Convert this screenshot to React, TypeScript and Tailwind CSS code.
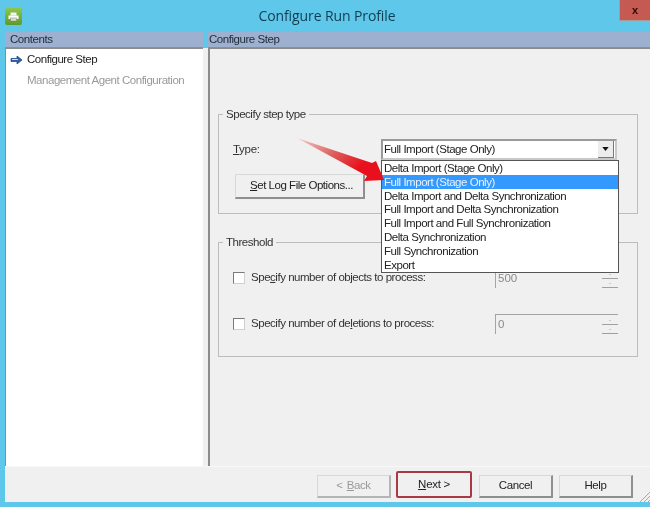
import React from 'react';

const font = "font-['Liberation_Sans',Arial,sans-serif]";

const dropdownItems = [
  'Delta Import (Stage Only)',
  'Full Import (Stage Only)',
  'Delta Import and Delta Synchronization',
  'Full Import and Delta Synchronization',
  'Full Import and Full Synchronization',
  'Delta Synchronization',
  'Full Synchronization',
  'Export',
];

function WizardButton({ children, disabled }: { children: React.ReactNode; disabled?: boolean }) {
  return (
    <button
      className={`w-[74px] h-[23px] flex items-center justify-center bg-[#f0f0f0] border border-[#d8d8d8] border-r-2 border-b-2 border-r-[#8f8f8f] border-b-[#8f8f8f] text-[11.5px] tracking-[-0.4px] ${disabled ? 'text-[#9a9a9a] border-r-[#b5b5b5] border-b-[#b5b5b5]' : 'text-[#222]'}`}
    >
      {children}
    </button>
  );
}

function Spinner({ value }: { value: string }) {
  return (
    <div className="w-[123px] h-[20px] flex items-center justify-between border-l border-t border-[#a4a4a4] bg-[#f0f0f0] pl-[2px] text-[11.5px] text-[#8a8a8a]">
      <span>{value}</span>
      <div className="w-[16px] h-full flex flex-col border-b border-[#a0a0a0]">
        <div className="flex-1 flex items-center justify-center text-[7px] leading-none text-[#999]">-</div>
        <div className="h-px bg-[#a0a0a0]" />
        <div className="flex-1 flex items-center justify-center text-[7px] leading-none text-[#999]">-</div>
      </div>
    </div>
  );
}

function ThresholdRow({ label, value }: { label: React.ReactNode; value: string }) {
  return (
    <div className="flex items-center h-[20px]">
      <div className="w-[12px] h-[12px] border border-[#7a7a7a] border-r-[#d0d0d0] border-b-[#d0d0d0] bg-white" />
      <span className="ml-[6px] w-[244px] text-[11.5px] tracking-[-0.47px] text-[#333]">{label}</span>
      <Spinner value={value} />
    </div>
  );
}

export default function App() {
  return (
    <div className={`${font} relative w-[650px] h-[507px] overflow-hidden bg-[#5fc8ea] flex flex-col blur-[0.3px]`}>
      {/* Title bar */}
      <div className="h-[32px] flex items-center relative shrink-0">
        <div className="ml-[5px] mt-[1px] w-[17px] h-[17px] rounded-[2px] bg-gradient-to-b from-[#8cc84b] to-[#5c9a2c] flex items-center justify-center">
          <svg width="11" height="10" viewBox="0 0 11 10">
            <rect x="2.5" y="0.5" width="6" height="3" fill="#f4f4f4" />
            <rect x="0.5" y="3.5" width="10" height="3.5" fill="#ffffff" />
            <rect x="2.5" y="6" width="6" height="3" fill="#dcdcdc" stroke="#6b8f3a" strokeWidth="0.5" />
          </svg>
        </div>
        <div className="flex-1 text-center font-['Open_Sans',sans-serif] text-[14px] tracking-[-0.1px] text-[#103c52] mt-[-1px] pr-[18px]">
          Configure Run Profile
        </div>
        <div className="absolute right-0 top-0 w-[31px] h-[21px] bg-[#c45a52] border-l border-b border-[#a89a95] flex items-center justify-center text-[11px] font-bold text-[#2a0a0a]">
          x
        </div>
      </div>

      {/* Main split */}
      <div className="flex-1 min-h-0 flex pl-[5px]">
        {/* Contents panel */}
        <div className="w-[198px] flex flex-col shrink-0">
          <div className="h-[16px] bg-[#9db0cf] border-b border-[#8a8f98] flex items-center pl-[5px] text-[11.5px] tracking-[-0.45px] text-[#1f2a36]">
            Contents
          </div>
          <div className="flex-1 bg-white border-l border-[#8c8c8c] border-t border-t-[#8c8c8c] text-[11.5px] tracking-[-0.47px]">
            <div className="flex items-center h-[21px] pl-[4px] text-[#222]">
              <svg width="13" height="10" viewBox="0 0 13 10" className="mr-[4px]">
                <path d="M1 3.5h6V1l5 4-5 4V6.5H1z" fill="#2f5fa8" stroke="#1c3c78" strokeWidth="0.7" />
                <path d="M2 4.5h6" stroke="#ffffff" strokeWidth="0.8" />
              </svg>
              Configure Step
            </div>
            <div className="flex items-center h-[21px] pl-[21px] text-[#9a9a9a]">Management Agent Configuration</div>
          </div>
        </div>

        {/* Splitter */}
        <div className="w-[5px] flex flex-col shrink-0">
          <div className="h-[16px]" />
          <div className="flex-1 bg-[#f0f0f0]" />
        </div>

        {/* Configure Step panel */}
        <div className="flex-1 min-w-0 flex flex-col">
          <div className="h-[16px] bg-[#9db0cf] border-b border-[#8a8f98] flex items-center pl-[1px] text-[11.5px] tracking-[-0.45px] text-[#1f2a36]">
            Configure Step
          </div>
          <div className="flex-1 bg-[#f0f0f0] border-l-2 border-[#8c8c8c] border-t border-t-[#8c8c8c] pt-[58px] pl-[8px] pr-[12px]">
            <fieldset className="h-[107px] border border-[#bcbcbc] px-[14px]">
              <legend className="ml-[-10px] px-[3px] text-[11.5px] leading-[14px] tracking-[-0.47px] text-[#333]">
                Specify step type
              </legend>
              <div className="flex items-center mt-[18px] h-[21px]">
                <span className="w-[148px] text-[11.5px] tracking-[-0.3px] text-[#333]">
                  <u>T</u>ype:
                </span>
                <div className="w-[236px] h-[21px] flex items-center justify-between bg-white border-2 border-[#9a9a9a] border-r-[#c8c8c8] border-b-[#c8c8c8] pl-[1px] pr-[1px] text-[11.5px] tracking-[-0.47px] text-[#222]">
                  Full Import (Stage Only)
                  <div className="w-[16px] h-[17px] flex items-center justify-center bg-[#ececec] border-r border-b border-[#777]">
                    <svg width="7" height="4" viewBox="0 0 8 5"><path d="M0 0h8L4 5z" fill="#111" /></svg>
                  </div>
                </div>
              </div>
              <button className="ml-[2px] mt-[14px] pl-[4px] w-[130px] h-[25px] bg-[#f0f0f0] border border-[#d8d8d8] border-r-2 border-b-2 border-r-[#8f8f8f] border-b-[#8f8f8f] text-[11.5px] tracking-[-0.47px] text-[#222]">
                <u>S</u>et Log File Options...
              </button>
            </fieldset>

            <fieldset className="mt-[21px] h-[122px] border border-[#bcbcbc] px-[14px]">
              <legend className="ml-[-10px] px-[3px] text-[11.5px] leading-[14px] tracking-[-0.47px] text-[#333]">
                Threshold
              </legend>
              <div className="mt-[19px]">
                <ThresholdRow label={<>Spe<u>c</u>ify number of objects to process:</>} value="500" />
              </div>
              <div className="mt-[26px]">
                <ThresholdRow label={<>Specify number of de<u>l</u>etions to process:</>} value="0" />
              </div>
            </fieldset>
          </div>
        </div>
      </div>

      {/* Footer bar */}
      <div className="relative ml-[5px] mb-[5px] h-[36px] shrink-0 bg-[#f0f0f0] border-t border-[#f8f8f8] flex items-start justify-end pt-[8px] pr-[17px]">
        <WizardButton disabled>
          &lt; <u className="ml-1">B</u>ack
        </WizardButton>
        <div className="ml-[5px] mt-[-4px] w-[76px] h-[27px] flex items-center justify-center bg-[#f0f0f0] border-2 border-[#a83a44] rounded-[2px] text-[11.5px] tracking-[-0.3px] text-[#222]">
          <u>N</u>ext &gt;
        </div>
        <div className="ml-[7px]">
          <WizardButton>Cancel</WizardButton>
        </div>
        <div className="ml-[6px]">
          <WizardButton>Help</WizardButton>
        </div>
        <svg width="10" height="10" viewBox="0 0 10 10" className="absolute right-0 bottom-0">
          <path d="M0 10L10 0M4 10L10 4M8 10L10 8" stroke="#a8a8a8" strokeWidth="1" />
        </svg>
      </div>

      {/* Open combo list */}
      <div className="absolute left-[381px] top-[160px] w-[238px] h-[113px] bg-white border border-[#555] text-[11.5px] leading-[14px] tracking-[-0.47px] text-[#222]">
        {dropdownItems.map((item, i) => (
          <div key={item} className={`h-[13.8px] pl-[2px] whitespace-nowrap ${i === 1 ? 'bg-[#3399ff] text-[#e8f2ff]' : ''}`}>
            {item}
          </div>
        ))}
      </div>

      {/* Red annotation arrow */}
      <svg width="100" height="50" viewBox="0 0 100 50" className="absolute left-[292px] top-[136px]">
        <defs>
          <linearGradient id="arrowFill" x1="0" y1="0" x2="1" y2="0.5">
            <stop offset="0" stopColor="#f0d0cc" />
            <stop offset="0.5" stopColor="#dc5a58" />
            <stop offset="0.85" stopColor="#e8101c" />
          </linearGradient>
        </defs>
        <path d="M5 2L80 27L84 25L92 44L72 45L75 40Z" fill="url(#arrowFill)" />
      </svg>
    </div>
  );
}
